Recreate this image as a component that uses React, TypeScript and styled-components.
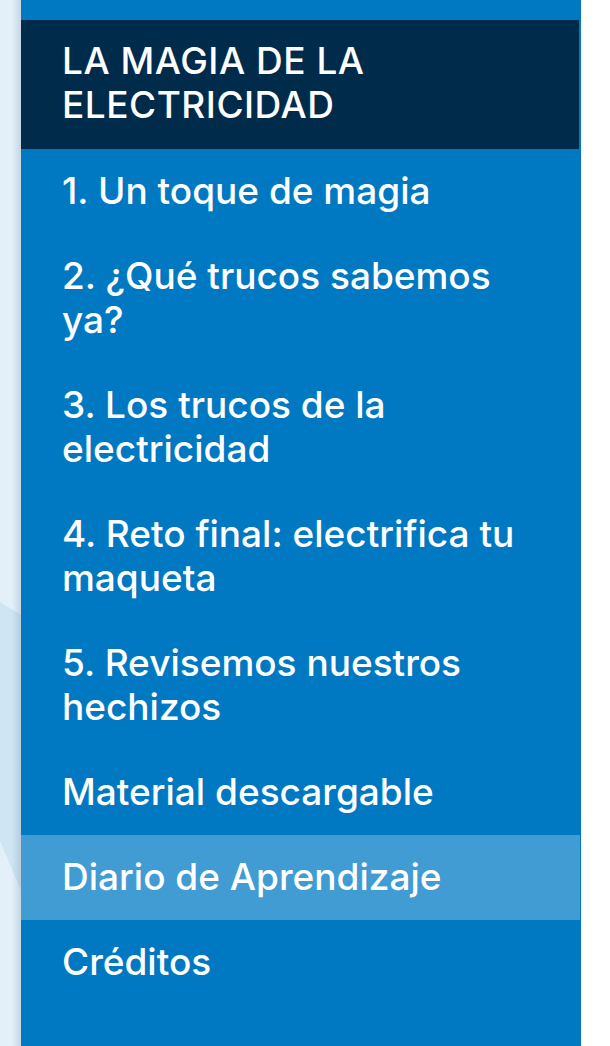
import styled, { createGlobalStyle } from "styled-components";

type ItemType = {
    label: string
    active?: boolean
}

const items: ItemType[] = [
    { label: "1. Un toque de magia" },
    { label: "2. ¿Qué trucos sabemos ya?" },
    { label: "3. Los trucos de la electricidad" },
    { label: "4. Reto final: electrifica tu maqueta" },
    { label: "5. Revisemos nuestros hechizos" },
    { label: "Material descargable" },
    { label: "Diario de Aprendizaje", active: true },
    { label: "Créditos" },
]

const GlobalStyle = createGlobalStyle`
    html, body {
        margin: 0;
        padding: 0;
        height: 100%;
    }
    body {
        font-family: Inter, "Noto Sans", "Liberation Sans", sans-serif;
        background: #ffffff;
        overflow: hidden;
    }
`

export default function App() {
    return (
        <>
            <GlobalStyle />
            <Page>
                <Backdrop />
                <Panel>
                    <Header>LA MAGIA DE LA ELECTRICIDAD</Header>
                    <Menu>
                        {items.map((item) => (
                            <MenuItem key={item.label} $active={item.active}>
                                {item.label}
                            </MenuItem>
                        ))}
                    </Menu>
                </Panel>
            </Page>
        </>
    )
}

const Page = styled.div`
    display: flex;
    height: 1046px;
    width: 610px;
    background: #ffffff;
`
// strip of the page background showing on the left of the menu
const Backdrop = styled.div`
    width: 21px;
    flex-shrink: 0;
    background:
        linear-gradient(to right, rgba(0, 40, 80, 0) 55%, rgba(0, 40, 80, 0.13) 100%),
        linear-gradient(211deg, #e3f0f9 0 527px, transparent 527px),
        linear-gradient(247deg, transparent 0 348px, #e3f0f9 348px),
        #d0e5f3;
`
const Panel = styled.nav`
    width: 560px;
    flex-shrink: 0;
    background: #0079c2;
    padding-top: 20px;
    box-sizing: border-box;
`
const Header = styled.h2`
    margin: 0 2px 0 0;
    padding: 19px 150px 22px 41px;
    background: #012b4b;
    color: #ffffff;
    font-size: 37px;
    font-weight: 500;
    line-height: 44px;
    letter-spacing: 0.5px;
`
const Menu = styled.ul`
    list-style: none;
    margin: 0;
    padding: 0;
`
const MenuItem = styled.li<{ $active?: boolean }>`
    margin-right: 1px;
    padding: 20px 56px 21px 41px;
    background: ${({ $active }) => ($active ? "#409cd3" : "transparent")};
    color: #ffffff;
    font-size: 37px;
    font-weight: 500;
    line-height: 44px;
`
